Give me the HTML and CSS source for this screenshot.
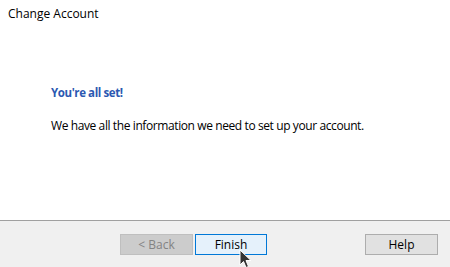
FILE: index.html
```html
<!DOCTYPE html>
<html lang="en">
<head>
  <meta charset="UTF-8" />
  <title>Change Account</title>
  <link rel="stylesheet" href="styles.css">
</head>
<body>
  <div class="dialog">
    <div class="content">
      <h1 class="title">Change Account</h1>
      <div class="message">
        <h2>You're all set!</h2>
        <p>We have all the information we need to set up your account.</p>
      </div>
    </div>

    <!-- Footer buttons -->
    <div class="footer">
      <div class="nav">
        <button class="btn" disabled>&lt; Back</button>
        <button class="btn default">Finish</button>
      </div>
      <button class="btn">Help</button>
      <svg class="cursor" width="14" height="20" viewBox="0 0 14 20">
        <path d="M1 1 L1 16 L4.5 12.5 L7 18.5 L9.5 17.5 L7 11.5 L12 11.5 Z" fill="#333" stroke="#fff" stroke-width="1"/>
      </svg>
    </div>
  </div>
</body>
</html>
```

FILE: styles.css
```css
html, body {
  margin: 0;
  padding: 0;
  background: white;
  font-family: 'Open Sans', 'Noto Sans', sans-serif;
  font-size: 12px;
  color: #000;
}

.dialog {
  width: 450px;
  height: 267px;
  display: flex;
  flex-direction: column;
}

.content {
  flex: 1;
  padding: 4px 8px 0;
}

.title {
  margin: 0;
  font-size: 12px;
  font-weight: 400;
  line-height: 20px;
}

.message {
  padding: 61px 0 0 43px;
}

.message h2 {
  margin: 0;
  font-size: 11.5px;
  font-weight: 700;
  letter-spacing: -0.4px;
  color: #2b58b1;
  line-height: 16px;
}

.message p {
  margin: 17px 0 0;
  letter-spacing: -0.4px;
  line-height: 16px;
}

.footer {
  position: relative;
  height: 47px;
  background: #f0f0f0;
  border-top: 1px solid #a0a0a0;
  display: flex;
  align-items: center;
  justify-content: space-between;
  padding: 0 12px 0 120px;
  box-sizing: border-box;
}

.nav {
  display: flex;
  gap: 2px;
}

.btn {
  width: 73px;
  height: 21px;
  padding: 0;
  font-family: inherit;
  font-size: 12px;
  background: #e1e1e1;
  border: 1px solid #adadad;
  color: #000;
}

.btn + .btn {
  width: 72px;
}

.btn:disabled {
  background: #cccccc;
  border-color: #bfbfbf;
  color: #838383;
}

.btn.default {
  background: #e5f1fb;
  border-color: #0078d7;
}

.cursor {
  position: absolute;
  left: 239px;
  top: 28px;
}
```
